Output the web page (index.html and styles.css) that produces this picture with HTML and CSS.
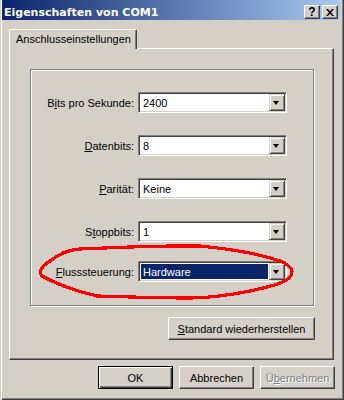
FILE: index.html
```html
<!DOCTYPE html>
<html lang="de">
<head>
    <meta charset="UTF-8">
    <meta name="viewport" content="width=device-width, initial-scale=1.0">
    <title>Eigenschaften von COM1</title>
    <link rel="stylesheet" href="styles.css">
</head>
<body>
    <div class="window">
        <div class="titlebar">
            <span class="title">Eigenschaften von COM1</span>
            <div class="caption-buttons">
                <span class="caption-btn help">?</span>
                <span class="caption-btn close">
                    <svg width="8" height="7" viewBox="0 0 8 7">
                        <path d="M0 0h2l2 2.5 2-2.5h2l-3 3.5 3 3.5h-2l-2-2.5-2 2.5h-2l3-3.5z" fill="#000"/>
                    </svg>
                </span>
            </div>
        </div>

        <div class="content">
            <div class="tabs">
                <div class="tab active">Anschlusseinstellungen</div>
            </div>

            <div class="panel">
                <div class="group">
                    <div class="row">
                        <label>B<u>i</u>ts pro Sekunde:</label>
                        <div class="combo"><span class="combo-value">2400</span><span class="combo-arrow"></span></div>
                    </div>
                    <div class="row">
                        <label><u>D</u>atenbits:</label>
                        <div class="combo"><span class="combo-value">8</span><span class="combo-arrow"></span></div>
                    </div>
                    <div class="row">
                        <label><u>P</u>arität:</label>
                        <div class="combo"><span class="combo-value">Keine</span><span class="combo-arrow"></span></div>
                    </div>
                    <div class="row">
                        <label>S<u>t</u>oppbits:</label>
                        <div class="combo"><span class="combo-value">1</span><span class="combo-arrow"></span></div>
                    </div>
                    <div class="row row-last">
                        <label><u>F</u>lusssteuerung:</label>
                        <div class="combo focused"><span class="combo-value"><span class="selected">Hardware</span></span><span class="combo-arrow"></span></div>
                    </div>
                </div>
                <div class="panel-actions">
                    <button class="btn btn-wide"><u>S</u>tandard wiederherstellen</button>
                </div>
            </div>

            <div class="actions">
                <button class="btn default">OK</button>
                <button class="btn">Abbrechen</button>
                <button class="btn" disabled>Ü<u>b</u>ernehmen</button>
            </div>
        </div>

        <!-- red marker drawn over the dialog -->
        <svg class="marker" width="344" height="400" viewBox="0 0 344 400">
            <path d="M42 276 C38 272, 42 266, 50 261 C58 255, 66 250, 80 249 L130 247 L170 246 L200 246 C230 249, 260 254, 280 261 C292 266, 295 272, 289 278 C283 283, 273 286, 250 291 C230 295, 210 298, 190 298 C160 298, 130 297, 97 296 C80 292, 60 286, 42 276 Z"
                  fill="none" stroke="#ff0000" stroke-width="3.2" shape-rendering="crispEdges"/>
        </svg>
    </div>
</body>
</html>
```

FILE: styles.css
```css
body {
    margin: 0;
    font-family: Tahoma, "Liberation Sans", Arial, sans-serif;
    font-size: 11px;
    color: #000;
    background: #d4d0c8;
}
.window {
    position: relative;
    width: 344px;
    height: 400px;
    background: #d4d0c8;
    box-shadow: inset 1px 0 #d4d0c8, inset 2px 0 #fff, inset -1px -1px #404040, inset -2px -2px #808080;
    overflow: hidden;
}
.titlebar {
    display: flex;
    align-items: center;
    justify-content: space-between;
    height: 20px;
    margin: 0 4px 0 2px;
    padding: 4px 2px 0 2px;
    box-sizing: border-box;
    background: linear-gradient(to right, #0a246a, #a6caf0);
}
.title {
    color: #fff;
    font-family: "DejaVu Sans", Verdana, sans-serif;
    font-weight: bold;
    font-size: 11px;
    white-space: nowrap;
}
.caption-buttons {
    display: flex;
    gap: 2px;
}
.caption-btn {
    display: flex;
    align-items: center;
    justify-content: center;
    width: 16px;
    height: 14px;
    box-sizing: border-box;
    background: #d4d0c8;
    border: 1px solid;
    border-color: #fff #404040 #404040 #fff;
    box-shadow: inset -1px -1px #808080;
}
.caption-btn.help {
    font-weight: bold;
    font-size: 12px;
    line-height: 12px;
}
.content {
    padding: 9px 0 0 9px;
}
.tabs {
    display: flex;
    position: relative;
    z-index: 1;
    margin-bottom: -1px;
}
.tab {
    height: 20px;
    box-sizing: border-box;
    padding: 0 5px 0 6px;
    line-height: 18px;
    background: #d4d0c8;
    border: 1px solid;
    border-color: #fff #404040 transparent #fff;
    border-bottom: none;
    box-shadow: inset -1px 0 #808080;
    border-radius: 2px 2px 0 0;
    white-space: nowrap;
}
.panel {
    width: 325px;
    height: 312px;
    box-sizing: border-box;
    padding: 20px 0 0 20px;
    border: 1px solid;
    border-color: #fff #404040 #404040 #fff;
    box-shadow: inset -1px -1px #808080;
}
.group {
    width: 284px;
    box-sizing: border-box;
    padding: 22px 0 23px 0;
    border: 1px solid #808080;
    box-shadow: 1px 1px 0 #fff, inset 1px 1px 0 #fff;
}
.row {
    display: flex;
    align-items: center;
    margin-bottom: 22px;
}
.row:nth-child(4) {
    margin-bottom: 19px;
}
.row-last {
    margin-bottom: 0;
}
.row label {
    width: 103px;
    margin-right: 4px;
    text-align: right;
    white-space: nowrap;
}
.combo {
    display: flex;
    width: 149px;
    height: 21px;
    box-sizing: border-box;
    padding: 1px;
    background: #fff;
    border: 1px solid;
    border-color: #808080 #fff #fff #808080;
    box-shadow: inset 1px 1px #404040, inset -1px -1px #d4d0c8;
}
.combo-value {
    flex: 1;
    display: flex;
    align-items: center;
    padding-left: 3px;
}
.combo.focused .combo-value {
    padding: 1px;
}
.selected {
    flex: 1;
    align-self: stretch;
    display: flex;
    align-items: center;
    padding-left: 2px;
    background: #0a246a;
    color: #fff;
}
.combo-arrow {
    position: relative;
    width: 16px;
    height: 17px;
    box-sizing: border-box;
    background: #d4d0c8;
    border: 1px solid;
    border-color: #d4d0c8 #404040 #404040 #d4d0c8;
    box-shadow: inset 1px 1px #fff, inset -1px -1px #808080;
}
.combo-arrow::after {
    content: "";
    position: absolute;
    left: 3px;
    top: 6px;
    border-left: 3.5px solid transparent;
    border-right: 3.5px solid transparent;
    border-top: 4px solid #000;
}
.panel-actions {
    display: flex;
    justify-content: flex-end;
    width: 285px;
    margin-top: 11px;
}
.btn {
    height: 23px;
    width: 75px;
    padding: 0;
    font-family: inherit;
    font-size: 11px;
    color: #000;
    background: #d4d0c8;
    border: 1px solid;
    border-color: #fff #404040 #404040 #fff;
    box-shadow: inset -1px -1px #808080;
}
.btn-wide {
    width: 147px;
}
.btn.default {
    border: 1px solid #000;
    box-shadow: inset 1px 1px #fff, inset -1px -1px #404040, inset -2px -2px #808080;
}
.btn:disabled {
    color: #808080;
    text-shadow: 1px 1px 0 #fff;
}
.actions {
    display: flex;
    justify-content: flex-end;
    gap: 6px;
    width: 326px;
    margin-top: 6px;
}
.marker {
    position: absolute;
    left: 0;
    top: 0;
    pointer-events: none;
}
```
